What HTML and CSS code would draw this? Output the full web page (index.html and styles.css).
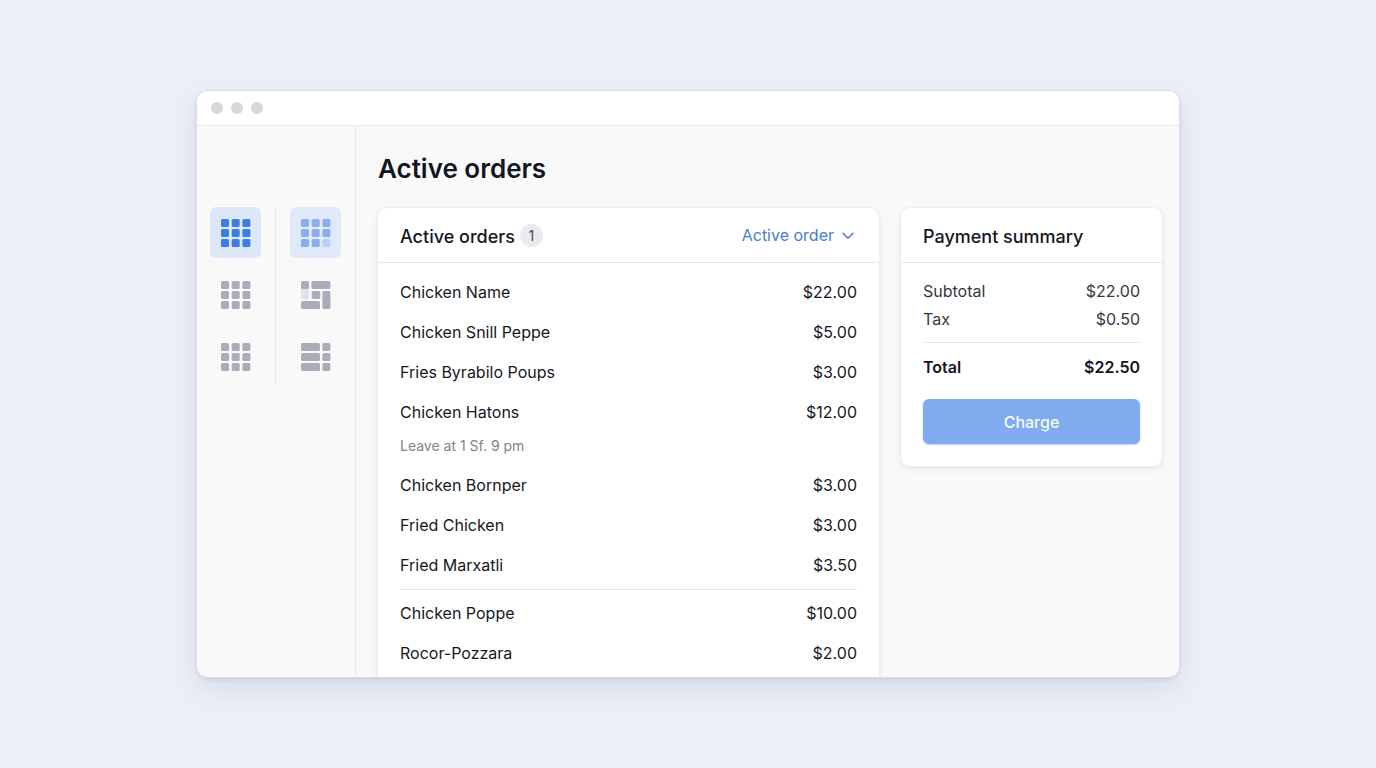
FILE: index.html
```html
<!DOCTYPE html>
<html lang="en">
<head>
<meta charset="utf-8">
<meta name="viewport" content="width=device-width, initial-scale=1">
<title>Active orders</title>
<link rel="stylesheet" href="styles.css">
</head>
<body>
<div class="window">
  <div class="titlebar"><span class="dot"></span><span class="dot"></span><span class="dot"></span></div>
  <div class="workspace">
    <nav class="sidebar" aria-label="Views">
      <div class="rail">
        <button class="tile tile-active" aria-label="Orders grid">
          <svg class="icon" viewBox="0 0 30 28"><rect width="8" height="8" rx="1.5"/><rect x="10.7" width="8" height="8" rx="1.5"/><rect x="21.4" width="8" height="8" rx="1.5"/><rect y="10" width="8" height="8" rx="1.5"/><rect x="10.7" y="10" width="8" height="8" rx="1.5"/><rect x="21.4" y="10" width="8" height="8" rx="1.5"/><rect y="20" width="8" height="8" rx="1.5"/><rect x="10.7" y="20" width="8" height="8" rx="1.5"/><rect x="21.4" y="20" width="8" height="8" rx="1.5"/></svg>
        </button>
        <button class="tile" aria-label="Tables grid">
          <svg class="icon" viewBox="0 0 30 28"><rect width="8" height="8" rx="1.5"/><rect x="10.7" width="8" height="8" rx="1.5"/><rect x="21.4" width="8" height="8" rx="1.5"/><rect y="10" width="8" height="8" rx="1.5"/><rect x="10.7" y="10" width="8" height="8" rx="1.5"/><rect x="21.4" y="10" width="8" height="8" rx="1.5"/><rect y="20" width="8" height="8" rx="1.5"/><rect x="10.7" y="20" width="8" height="8" rx="1.5"/><rect x="21.4" y="20" width="8" height="8" rx="1.5"/></svg>
        </button>
        <button class="tile" aria-label="Menu grid">
          <svg class="icon" viewBox="0 0 30 28"><rect width="8" height="8" rx="1.5"/><rect x="10.7" width="8" height="8" rx="1.5"/><rect x="21.4" width="8" height="8" rx="1.5"/><rect y="10" width="8" height="8" rx="1.5"/><rect x="10.7" y="10" width="8" height="8" rx="1.5"/><rect x="21.4" y="10" width="8" height="8" rx="1.5"/><rect y="20" width="8" height="8" rx="1.5"/><rect x="10.7" y="20" width="8" height="8" rx="1.5"/><rect x="21.4" y="20" width="8" height="8" rx="1.5"/></svg>
        </button>
      </div>
      <div class="rail rail-second">
        <button class="tile tile-soft" aria-label="Compact grid">
          <svg class="icon" viewBox="0 0 30 28"><rect width="8" height="8" rx="1.5"/><rect x="10.7" width="8" height="8" rx="1.5"/><rect x="21.4" width="8" height="8" rx="1.5"/><rect y="10" width="8" height="8" rx="1.5"/><rect x="10.7" y="10" width="8" height="8" rx="1.5"/><rect x="21.4" y="10" width="8" height="8" rx="1.5"/><rect y="20" width="8" height="8" rx="1.5"/><rect x="10.7" y="20" width="8" height="8" rx="1.5"/><rect class="faint" x="21.4" y="20" width="8" height="8" rx="1.5"/></svg>
        </button>
        <button class="tile" aria-label="Floor layout">
          <svg class="icon" viewBox="0 0 30 28"><rect class="pale" y="7" width="8" height="11" rx="1"/><rect width="8" height="8" rx="1.5"/><rect x="10.4" width="19" height="8" rx="1.5"/><rect x="10.7" y="10" width="8.6" height="8" rx="1.5"/><rect x="21.4" y="10" width="8" height="18" rx="1.5"/><rect y="20" width="19" height="8" rx="1.5"/></svg>
        </button>
        <button class="tile" aria-label="List layout">
          <svg class="icon" viewBox="0 0 30 28"><rect width="19" height="8" rx="1.5"/><rect x="21.4" width="8" height="8" rx="1.5"/><rect y="10" width="19" height="8" rx="1.5"/><rect x="21.4" y="10" width="8" height="8" rx="1.5"/><rect y="20" width="19" height="8" rx="1.5"/><rect x="21.4" y="20" width="8" height="8" rx="1.5"/></svg>
        </button>
      </div>
    </nav>
    <main class="content">
      <h1 class="page-title">Active orders</h1>
      <div class="columns">
        <section class="card orders">
          <header class="card-header">
            <h2 class="card-title">Active orders</h2>
            <span class="count">1</span>
            <div class="filter">
              <select class="filter-select" aria-label="Order filter"><option>Active order</option></select>
              <svg class="chevron" viewBox="0 0 12 8"><path d="M1.2 1.4 6 6.2l4.8-4.8"/></svg>
            </div>
          </header>
          <div class="order-body">
            <table class="order-table">
              <tr><td>Chicken Name</td><td class="price">$22.00</td></tr>
              <tr><td>Chicken Snill Peppe</td><td class="price">$5.00</td></tr>
              <tr><td>Fries Byrabilo Poups</td><td class="price">$3.00</td></tr>
              <tr><td>Chicken Hatons</td><td class="price">$12.00</td></tr>
              <tr><td class="note" colspan="2">Leave at 1 Sf. 9 pm</td></tr>
              <tr><td>Chicken Bornper</td><td class="price">$3.00</td></tr>
              <tr><td>Fried Chicken</td><td class="price">$3.00</td></tr>
              <tr><td>Fried Marxatli</td><td class="price">$3.50</td></tr>
            </table>
            <table class="order-table order-table-next">
              <tr><td>Chicken Poppe</td><td class="price">$10.00</td></tr>
              <tr><td>Rocor-Pozzara</td><td class="price">$2.00</td></tr>
            </table>
          </div>
        </section>
        <section class="card payment">
          <header class="card-header"><h2 class="card-title">Payment summary</h2></header>
          <div class="payment-body">
            <dl class="line"><dt>Subtotal</dt><dd>$22.00</dd></dl>
            <dl class="line"><dt>Tax</dt><dd>$0.50</dd></dl>
            <dl class="line total"><dt>Total</dt><dd>$22.50</dd></dl>
            <button class="charge">Charge</button>
          </div>
        </section>
      </div>
    </main>
  </div>
</div>
</body>
</html>
```

FILE: styles.css
```css
* { box-sizing: border-box; }

body {
  margin: 0;
  height: 100vh;
  padding: 91px 197px;
  display: flex;
  background: #ebf0f8;
  color: #14181f;
  font: 16px/24px Inter, "Liberation Sans", sans-serif;
}

h1, h2, dl, dd { margin: 0; }
button, select { font: inherit; border: 0; padding: 0; cursor: pointer; }

.window {
  flex: 1;
  display: flex;
  flex-direction: column;
  min-width: 0;
  overflow: hidden;
  border-radius: 10px;
  background: #f9f9fa;
  box-shadow: 0 0 0 1px #d9dee6, 0 2px 4px rgba(70, 85, 120, .16), 0 10px 28px rgba(70, 85, 120, .14);
}

.titlebar {
  flex: none;
  display: flex;
  align-items: center;
  gap: 8px;
  height: 35px;
  padding: 0 14px;
  background: #fff;
  border-bottom: 1px solid #e6e8ea;
}
.dot { width: 12px; height: 12px; border-radius: 50%; background: #d6d8db; }

.workspace { flex: 1; display: flex; min-height: 0; }

.sidebar {
  flex: none;
  display: flex;
  align-items: flex-start;
  width: 159px;
  padding: 81px 14px 0 13px;
  border-right: 1px solid #e6e8ea;
}
.rail { display: flex; flex-direction: column; gap: 11px; padding-right: 14px; }
.rail-second { padding: 0 0 0 14px; border-left: 1px solid #e3e5e8; height: 176px; }
.tile {
  flex: none;
  display: grid;
  place-items: center;
  width: 51px;
  height: 51px;
  border-radius: 6px;
  background: transparent;
  color: #a9adb9;
}
.tile-active { background: #dce7fa; color: #3d7de0; }
.tile-soft { background: #e0e9fa; color: #8aaeea; }
.icon { width: 30px; height: 28px; fill: currentColor; }
.faint { fill: #b9d0f6; }
.pale { fill: #dde2ec; }

.content {
  flex: 1;
  display: flex;
  flex-direction: column;
  min-width: 0;
  padding: 25px 17px 0 22px;
}
.page-title { font-size: 26px; line-height: 36px; font-weight: 600; color: #111622; }
.columns {
  display: flex;
  align-items: flex-start;
  gap: 22px;
  margin-top: 21px;
}

.card {
  border-radius: 9px;
  background: #fff;
  box-shadow: 0 0 0 1px #eceef0, 0 1px 3px rgba(30, 40, 60, .14), 0 3px 8px rgba(30, 40, 60, .06);
}
.orders { flex: 1; min-width: 0; }
.payment { flex: none; width: 261px; }

.card-header {
  display: flex;
  align-items: center;
  height: 55px;
  padding: 0 22px;
  border-bottom: 1px solid #e4e7eb;
}
.card-title { padding-top: 3px; font-size: 18px; line-height: 24px; font-weight: 500; color: #12161f; }
.count {
  width: 23px;
  height: 23px;
  margin-left: 5px;
  border-radius: 50%;
  background: #e9ebef;
  color: #454b57;
  font-size: 14px;
  line-height: 23px;
  text-align: center;
}
.filter { position: relative; margin-left: auto; color: #457fce; }
.filter-select {
  appearance: none;
  field-sizing: content;
  display: block;
  height: 24px;
  padding-right: 23px;
  background: transparent;
  color: inherit;
}
.chevron {
  position: absolute;
  top: 9px;
  right: 3px;
  width: 12px;
  height: 8px;
  fill: none;
  stroke: #5681bd;
  stroke-width: 1.5;
  stroke-linecap: round;
  stroke-linejoin: round;
  pointer-events: none;
}

.order-body { padding: 9px 22px 22px; }
.order-table { width: 100%; border-collapse: collapse; }
.order-table td { height: 40px; padding: 0; }
.order-table .price { text-align: right; }
.order-table .note {
  height: 33px;
  padding-bottom: 5px;
  color: #7e838c;
  font-size: 14px;
}
.order-table-next {
  margin-top: 4px;
  padding-top: 3px;
  border-collapse: separate;
  border-spacing: 0;
  border-top: 1px solid #e4e7eb;
}

.payment-body { padding: 14px 22px 22px; }
.line { display: flex; justify-content: space-between; line-height: 28px; color: #343941; }
.total {
  margin-top: 9px;
  padding: 10px 0 18px;
  border-top: 1px solid #e4e7eb;
  color: #12161f;
  font-weight: 600;
}
.charge {
  display: block;
  width: 100%;
  height: 45px;
  border-radius: 6px;
  background: #80abee;
  color: #f7faff;
  font-weight: 500;
  box-shadow: 0 1px 2px rgba(60, 110, 190, .3);
}
```
